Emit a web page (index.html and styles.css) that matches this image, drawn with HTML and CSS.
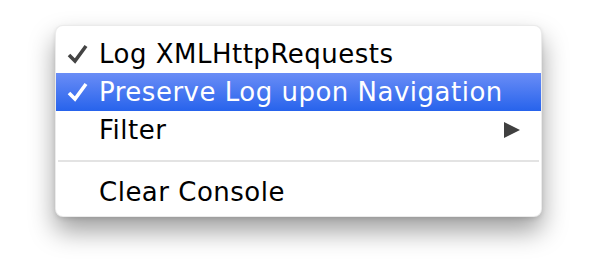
FILE: index.html
```html
<!DOCTYPE html>
<html>
<head>
    <title>Console Menu</title>
    <link rel="stylesheet" href="styles.css">
</head>
<body>
    <div class="menu">
        <div class="menu-item">
            <span class="check"><svg width="21" height="20" viewBox="0 0 21 20"><path d="M2 11 L8 17 L19 2" fill="none" stroke="currentColor" stroke-width="3.6"/></svg></span>
            <span class="label">Log XMLHttpRequests</span>
        </div>
        <div class="menu-item selected">
            <span class="check"><svg width="21" height="20" viewBox="0 0 21 20"><path d="M2 11 L8 17 L19 2" fill="none" stroke="currentColor" stroke-width="3.6"/></svg></span>
            <span class="label">Preserve Log upon Navigation</span>
        </div>
        <div class="menu-item">
            <span class="check"></span>
            <span class="label">Filter</span>
            <span class="submenu-arrow"></span>
        </div>
        <div class="separator"></div>
        <div class="menu-item">
            <span class="check"></span>
            <span class="label">Clear Console</span>
        </div>
    </div>
</body>
</html>
```

FILE: styles.css
```css
html, body {
    height: 100%;
}
body {
    margin: 0;
    padding: 25px 0 0 55px;
    box-sizing: border-box;
    background: #fff;
    font-family: "DejaVu Sans", "Liberation Sans", sans-serif;
}
.menu {
    width: 487px;
    height: 192px;
    box-sizing: border-box;
    padding: 9px 0 7px;
    background: #fff;
    border-radius: 8px;
    border: 1px solid rgba(0,0,0,0.08);
    box-shadow: 0 14px 26px rgba(0,0,0,0.38), 0 2px 4px rgba(0,0,0,0.1);
}
.menu-item {
    display: flex;
    align-items: center;
    height: 38px;
    font-size: 26px;
    letter-spacing: 0.5px;
    color: #000;
}
.check {
    width: 43px;
    display: flex;
    justify-content: flex-end;
    box-sizing: border-box;
    color: #444;
}
.check svg {
    margin-right: 11px;
}
.label {
    flex: 1;
}
.selected {
    background: linear-gradient(#6a8df6, #2763ec);
    color: #fff;
}
.selected .check {
    color: #fff;
}
.submenu-arrow {
    width: 0;
    height: 0;
    border-top: 8px solid transparent;
    border-bottom: 8px solid transparent;
    border-left: 16px solid #404040;
    margin-right: 21px;
}
.separator {
    height: 2px;
    background: #e3e3e3;
    margin: 11px 2px 11px 2px;
}
```
